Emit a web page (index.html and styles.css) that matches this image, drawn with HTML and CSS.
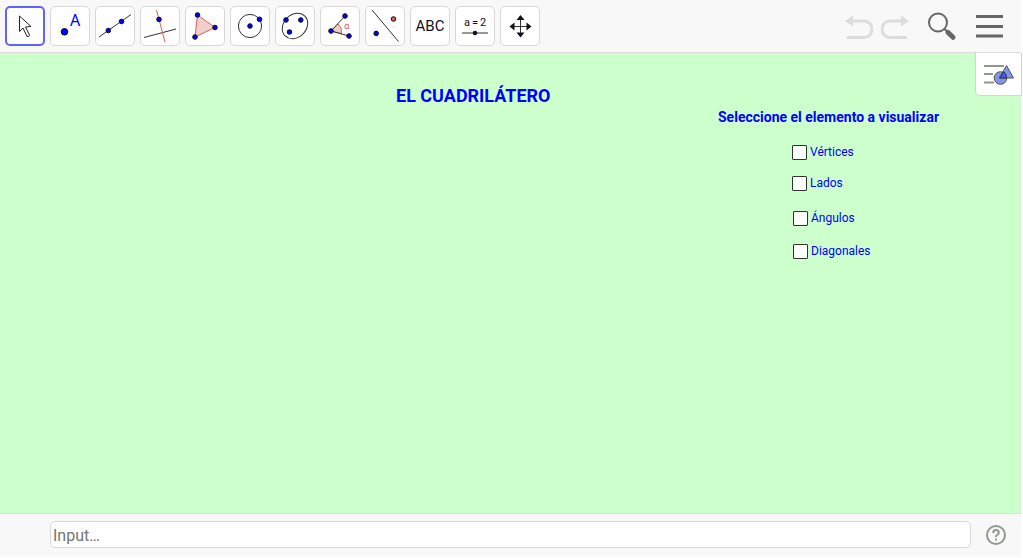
FILE: index.html
```html
<!DOCTYPE html>
<html lang="es">
<head>
<meta charset="utf-8">
<title>El cuadrilátero</title>
<link rel="stylesheet" href="styles.css">
</head>
<body>
<div class="applet">
  <header class="toolbar">
    <div class="tools">
      <button class="tool tool-active" aria-label="Mover"><svg viewBox="0 0 32 32"><path class="cursor" d="M10.500 6v15.500l3.500-3.500 4 8.500q2 .5 2.500-1.500l-4-8 5.500-.5z"/></svg></button>
      <button class="tool" aria-label="Punto"><svg viewBox="0 0 32 32"><circle class="pt" cx="10.500" cy="21.800" r="3.300"/><text class="letter" x="16" y="16">A</text></svg></button>
      <button class="tool" aria-label="Recta"><svg viewBox="0 0 32 32"><path class="ln" d="M0 27 32 4.500"/><circle class="pt" cx="9.300" cy="20.500" r="2.300"/><circle class="pt" cx="22.500" cy="11.500" r="2.300"/></svg></button>
      <button class="tool" aria-label="Perpendicular"><svg viewBox="0 0 32 32"><path class="ln" d="M0 27.500 32 19"/><path class="red" d="M12.500 0 21 32"/><circle class="pt" cx="15" cy="9.400" r="2.300"/></svg></button>
      <button class="tool" aria-label="Polígono"><svg viewBox="0 0 32 32"><path class="red fill" d="M8.500 5 26 17.500 6 27z"/><circle class="pt" cx="8.500" cy="5" r="2.300"/><circle class="pt" cx="26" cy="17.500" r="2.300"/><circle class="pt" cx="6" cy="27" r="2.300"/></svg></button>
      <button class="tool" aria-label="Circunferencia"><svg viewBox="0 0 32 32"><circle class="ln" cx="16" cy="16" r="11.600"/><circle class="pt" cx="16" cy="16" r="2.300"/><circle class="pt" cx="25.500" cy="9.300" r="2.300"/></svg></button>
      <button class="tool" aria-label="Elipse"><svg viewBox="0 0 32 32"><ellipse class="ln" cx="16" cy="16" rx="14" ry="11.300" transform="rotate(-45 16 16)"/><circle class="pt" cx="7" cy="10" r="2.300"/><circle class="pt" cx="21.800" cy="10" r="2.300"/><circle class="pt" cx="10.500" cy="22" r="2.300"/></svg></button>
      <button class="tool" aria-label="Ángulo"><svg viewBox="0 0 32 32"><path class="red fill" d="M7 21 14 14q4.500 4 3.500 9.500z"/><path class="ln" d="M21 6 7 21l18 5"/><text class="alpha" x="20" y="19">α</text><circle class="pt" cx="21" cy="6" r="2.300"/><circle class="pt" cx="7" cy="21" r="2.300"/><circle class="pt" cx="25" cy="26" r="2.300"/></svg></button>
      <button class="tool" aria-label="Simetría"><svg viewBox="0 0 32 32"><path class="ln" d="M3 0 29.500 31.500"/><circle class="pt" cx="7.200" cy="23.400" r="2.300"/><circle class="pt pt-red" cx="24.500" cy="9" r="2.300"/></svg></button>
      <button class="tool tool-text">ABC</button>
      <button class="tool tool-slider" aria-label="Deslizador a=2"><span class="slider-text"><span>a</span><span>=</span><span>2</span></span><svg class="slider-icon" viewBox="0 0 26 6"><path class="ln" d="M0 3h26"/><circle class="dark" cx="13" cy="3" r="2.300"/></svg></button>
      <button class="tool" aria-label="Desplazar vista"><svg viewBox="0 0 32 32"><path class="ln" d="M16.500 7v18M7 16.500h18"/><path class="dark" d="m16.500 5 4 5h-8zm0 22.500 4-5h-8zM5.500 16.500l5-4v8zm22 0-5-4v8z"/></svg></button>
    </div>
    <div class="actions">
      <button class="action" aria-label="Deshacer"><svg class="undo" viewBox="0 0 28 28"><path class="arc" d="M6 9h13.500a7 7.700 0 0 1 0 16.500H2"/><path class="head" d="M0 9l8-5.500v11z"/></svg></button>
      <button class="action" aria-label="Rehacer"><svg class="undo" viewBox="0 0 28 28"><path class="arc" d="M22 9H8.500a7 7.700 0 0 0 0 16.500H26"/><path class="head" d="M28 9l-8-5.500v11z"/></svg></button>
      <button class="action search" aria-label="Buscar"><svg class="lens" viewBox="0 0 30 30"><circle class="glass" cx="11" cy="11.500" r="9"/><path class="glass" d="m17.500 18 3.500 3.500"/><path class="handle" d="m21 21.500 5 4.800"/></svg></button>
      <button class="action menu" aria-label="Menú"><svg class="bars" viewBox="0 0 28 24"><path d="M1 2.500h27M1 12.500h27M1 22h27"/></svg></button>
    </div>
  </header>
  <main class="canvas">
    <h1 class="title">EL CUADRILÁTERO</h1>
    <h2 class="prompt">Seleccione el elemento a visualizar</h2>
    <label class="option vertices"><input class="box" type="checkbox">Vértices</label>
    <label class="option lados"><input class="box" type="checkbox">Lados</label>
    <label class="option angulos"><input class="box" type="checkbox">Ángulos</label>
    <label class="option diagonales"><input class="box" type="checkbox">Diagonales</label>
    <button class="style-toggle" aria-label="Barra de estilo"><svg class="style-icon" viewBox="0 0 32 22"><path class="rows" d="M1 3h20M1 11h9M1 19.500h10"/><circle class="shape" cx="17.500" cy="15" r="6.300"/><path class="shape" d="M23.500 2.500 30.500 15H16.500z"/><path class="overlap" d="M20.500 8.500q3 2 3.200 6.500H16.500z"/></svg></button>
  </main>
  <footer class="inputbar">
    <input class="entry" type="text" placeholder="Input…" aria-label="Entrada">
    <button class="action" aria-label="Ayuda"><svg class="help" viewBox="0 0 20 20"><circle cx="10" cy="10" r="9"/><path d="M7.200 8q0-3 2.800-3t2.800 2.700Q12.800 9 11 10q-1 .7-1 2M10 13.500v2"/></svg></button>
  </footer>
</div>
</body>
</html>
```

FILE: styles.css
```css
* { box-sizing: border-box; }

body {
  margin: 0;
  background: #fff;
  font-family: Roboto, "Liberation Sans", sans-serif;
}

.applet {
  display: flex;
  flex-direction: column;
  min-height: 100vh;
  padding: 0 2px 1px 0;
}

button {
  padding: 0;
  border: 0;
  background: none;
  font-family: inherit;
  color: inherit;
}

svg { display: block; }

.toolbar {
  display: flex;
  justify-content: space-between;
  align-items: center;
  padding: 6px 18px 6px 5px;
  border-bottom: 1px solid #dcdcdc;
  background: #f8f8f8;
}

.tools { display: flex; gap: 5px; }

.tool {
  display: flex;
  flex-direction: column;
  align-items: center;
  justify-content: center;
  width: 40px;
  height: 40px;
  border: 1px solid #d8d8d8;
  border-radius: 5px;
  background: #fff;
}

.tool svg { width: 32px; height: 32px; }
.tool-active { border: 2px solid #6161ff; }
.tool-text { font-size: 15px; color: #111120; }
.tool .slider-icon { width: 26px; height: 6px; }
.slider-text { display: flex; gap: 2px; font-size: 11px; line-height: 14px; color: #111120; }

.cursor { fill: #fff; stroke: #222; }
.pt { fill: #00f; stroke: #111; }
.pt-red { fill: #e06050; }
.ln { fill: none; stroke: #333; }
.red { fill: none; stroke: #db6158; }
.fill { fill: #f0cfcb; }
.dark { fill: #111120; }
.letter { fill: #00f; font-family: "Noto Sans", sans-serif; font-size: 16px; }
.alpha { fill: #db6158; font-family: "Noto Sans", sans-serif; font-size: 9px; }

.actions { display: flex; align-items: center; }
.action { display: block; flex: none; }
.undo { width: 28px; height: 28px; margin-right: 8px; }
.arc { fill: none; stroke: #dcdcdc; stroke-width: 3; }
.head { fill: #dcdcdc; }
.lens { width: 30px; height: 30px; }
.search { margin-left: 10px; }
.glass { fill: none; stroke: #666; stroke-width: 2; }
.handle { stroke: #666; stroke-width: 5; stroke-linecap: round; }
.menu { margin-left: 18px; }
.bars { width: 28px; height: 24px; fill: none; stroke: #666; stroke-width: 3; }

.canvas {
  position: relative;
  flex: 1;
  background: #cfc;
  color: #00f;
}

.title,
.prompt,
.option {
  position: absolute;
  margin: 0;
  white-space: nowrap;
}

.title { left: 396px; top: 32px; font-size: 18px; line-height: 22px; }
.prompt { left: 718px; top: 55px; font-size: 14px; line-height: 18px; }

.option {
  display: flex;
  align-items: center;
  gap: 3px;
  font-size: 12px;
  line-height: 16px;
}

.vertices { left: 792px; top: 91px; }
.lados { left: 792px; top: 122px; }
.angulos { left: 793px; top: 157px; }
.diagonales { left: 793px; top: 190px; }

.box {
  appearance: none;
  width: 15px;
  height: 15px;
  margin: 0;
  border: 1px solid #333;
  border-radius: 1px;
  background: #fff;
}

.style-toggle {
  position: absolute;
  top: 0;
  right: -1px;
  display: flex;
  align-items: center;
  justify-content: center;
  width: 47px;
  height: 43px;
  border: 1px solid #c4dcd4;
  border-top: 0;
  border-radius: 0 0 0 5px;
  background: #fff;
}

.style-icon { width: 32px; height: 22px; }
.rows { stroke: #8c998c; stroke-width: 2; }
.shape { fill: #7f95e8; stroke: #555; }
.overlap { fill: #4658e8; stroke: #334; }

.inputbar {
  display: flex;
  align-items: center;
  gap: 15px;
  padding: 7px 15px 9px 50px;
  border-top: 1px solid #dcdcdc;
  background: #f8f8f8;
}

.entry {
  flex: 1;
  min-width: 0;
  height: 27px;
  padding: 1px 2px 0;
  border: 1px solid #d8d8d8;
  border-radius: 5px;
  background: #fff;
  font-family: inherit;
  font-size: 16px;
}

.entry::placeholder { color: #757575; }
.help { width: 20px; height: 20px; fill: none; stroke: #8f998f; stroke-width: 2; }
```
